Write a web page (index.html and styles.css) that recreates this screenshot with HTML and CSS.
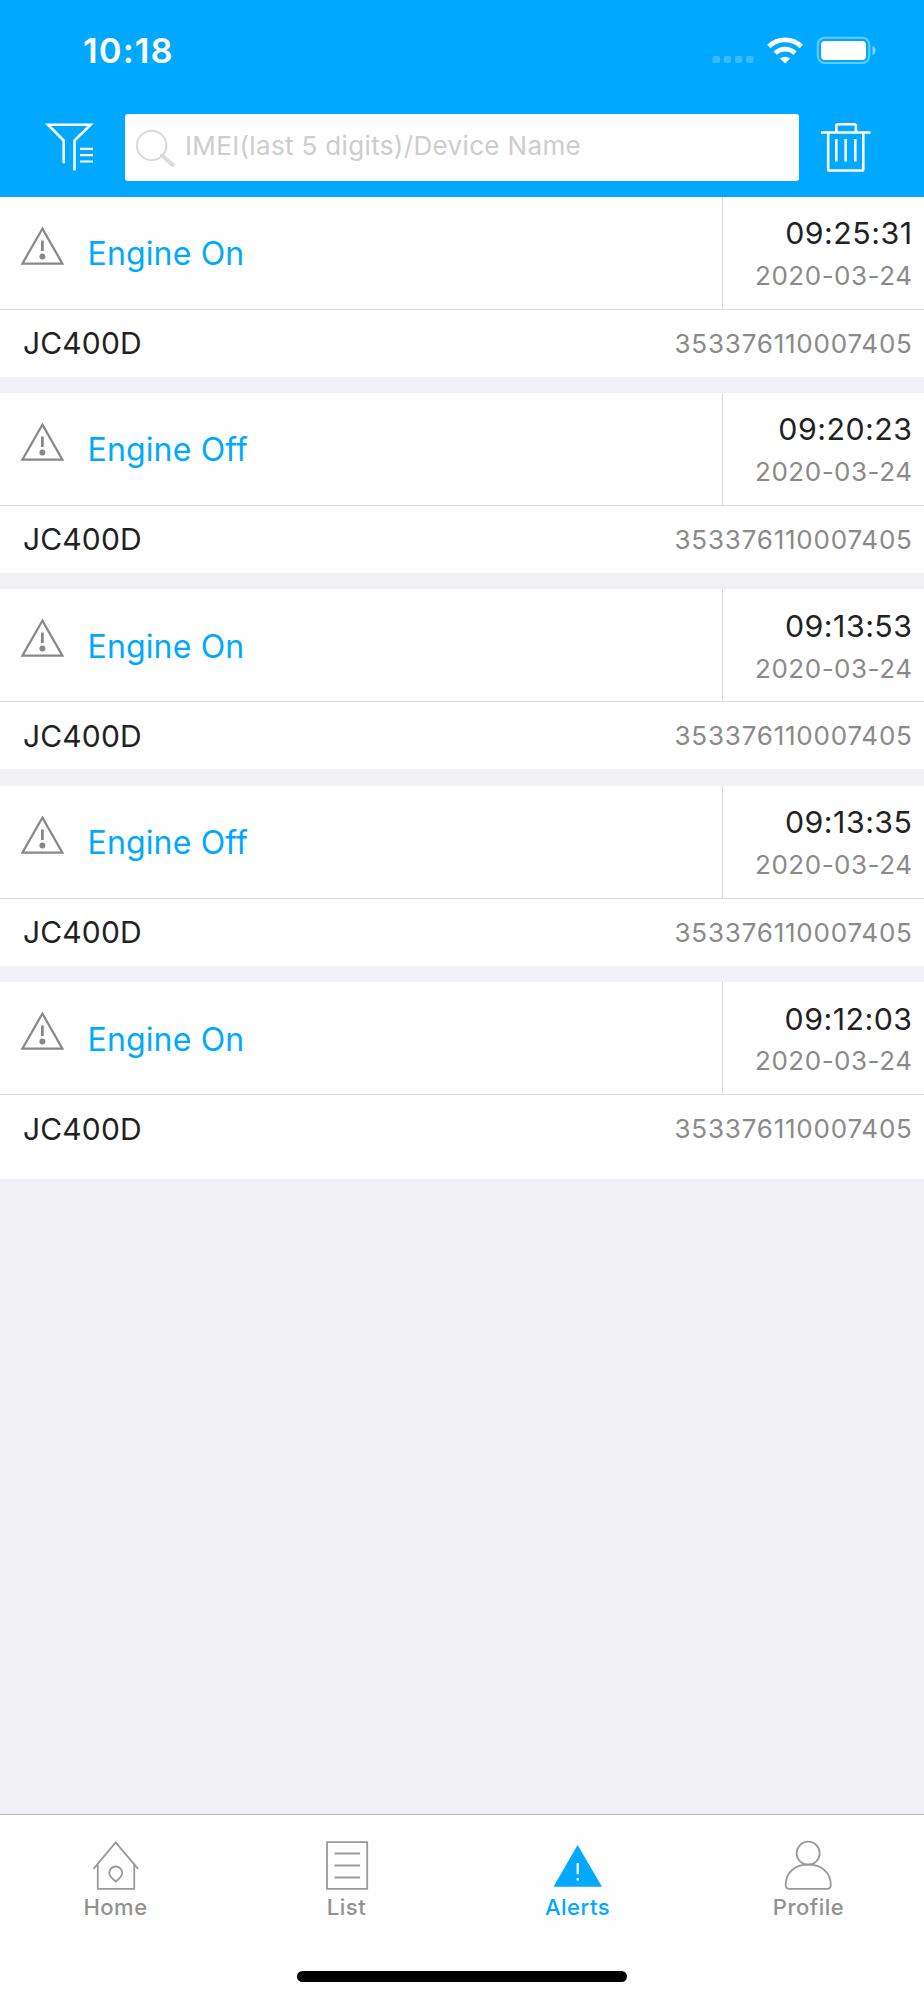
FILE: index.html
```html
<!DOCTYPE html>
<html lang="en">
<head>
<meta charset="utf-8">
<title>Alerts</title>
<link rel="stylesheet" href="styles.css">
</head>
<body>
<svg class="defs" aria-hidden="true">
  <symbol id="warning" viewBox="0 0 46 42">
    <path d="M22.400 3.600 42.400 38.600H2.400Z" fill="none" stroke="#888" stroke-width="2.2"/>
    <path d="M22.400 15.500v10.500" stroke="#888" stroke-width="2.800"/>
    <circle cx="22.400" cy="31.500" r="3" fill="#888"/>
  </symbol>
</svg>
<div class="screen">
  <header class="header">
    <div class="status">
      <span class="clock">10:18</span>
      <svg class="indicators" width="166" height="30" viewBox="711 36 166 30">
        <g fill="#fff" fill-opacity=".22">
          <rect x="712.500" y="56" width="7.500" height="7" rx="2"/><rect x="723.700" y="56" width="7.500" height="7" rx="2"/><rect x="734.900" y="56" width="7.500" height="7" rx="2"/><rect x="746" y="56" width="7.500" height="7" rx="2"/>
        </g>
        <g fill="none" stroke="#fff" stroke-width="4.800">
          <path d="M768.900 46.500a23 23 0 0 1 32.400 0"/>
          <path d="M775.300 53.200a14 14 0 0 1 19.600 0"/>
        </g>
        <path d="M780 58.600a7.600 7.600 0 0 1 10.200 0L785.100 63.500Z" fill="#fff"/>
        <rect x="817.800" y="37.700" width="51.500" height="25.300" rx="7" fill="none" stroke="#fff" stroke-opacity=".4" stroke-width="2"/>
        <rect x="821" y="41" width="45" height="19" rx="4" fill="#fff"/>
        <path d="M872.500 46v9q3-1.200 3-4.500t-3-4.500Z" fill="#fff" fill-opacity=".5"/>
      </svg>
    </div>
    <div class="toolbar">
      <svg class="filter" width="50" height="50" viewBox="44 122 50 50" fill="none" stroke="#fff" stroke-width="2.600">
        <path d="M63.700 163.300V140.500L48 124.700H90.500L74.500 140.500V170.500"/>
        <path d="M80 148.900h13M80 155.200h13M80 161.500h13" stroke-width="2.200"/>
      </svg>
      <label class="search">
        <svg width="40" height="40" viewBox="135 127 40 40" fill="none" stroke="#dadada">
          <circle cx="151.700" cy="144.500" r="14.700" stroke-width="2"/>
          <path d="M162 154.500 172.500 163.800" stroke-width="4" stroke-linecap="round"/>
        </svg>
        <span class="placeholder">IMEI(last 5 digits)/Device Name</span>
      </label>
      <svg class="trash" width="52" height="52" viewBox="820 121 52 52" fill="none" stroke="#fff" stroke-width="2.600">
        <path d="M821 132.500h49.500"/>
        <path d="M836.300 132v-6.500a1.300 1.300 0 0 1 1.300-1.300h17a1.300 1.300 0 0 1 1.300 1.300v6.500"/>
        <path d="M828.200 132.500v36.400a1.600 1.600 0 0 0 1.600 1.600h31.900a1.600 1.600 0 0 0 1.600-1.600V132.500"/>
        <path d="M836.300 139v22.500M845.700 139v22.500M855.300 139v22.500"/>
      </svg>
    </div>
  </header>

  <main class="list">
    <article class="card">
      <div class="event"><svg class="warn"><use href="#warning"/></svg><span class="title">Engine On</span><div class="when"><span class="time">09:25:31</span><span class="date">2020-03-24</span></div></div>
      <div class="device"><span class="model">JC400D</span><span class="imei">353376110007405</span></div>
    </article>
    <article class="card">
      <div class="event"><svg class="warn"><use href="#warning"/></svg><span class="title">Engine Off</span><div class="when"><span class="time">09:20:23</span><span class="date">2020-03-24</span></div></div>
      <div class="device"><span class="model">JC400D</span><span class="imei">353376110007405</span></div>
    </article>
    <article class="card">
      <div class="event"><svg class="warn"><use href="#warning"/></svg><span class="title">Engine On</span><div class="when"><span class="time">09:13:53</span><span class="date">2020-03-24</span></div></div>
      <div class="device"><span class="model">JC400D</span><span class="imei">353376110007405</span></div>
    </article>
    <article class="card">
      <div class="event"><svg class="warn"><use href="#warning"/></svg><span class="title">Engine Off</span><div class="when"><span class="time">09:13:35</span><span class="date">2020-03-24</span></div></div>
      <div class="device"><span class="model">JC400D</span><span class="imei">353376110007405</span></div>
    </article>
    <article class="card">
      <div class="event"><svg class="warn"><use href="#warning"/></svg><span class="title">Engine On</span><div class="when"><span class="time">09:12:03</span><span class="date">2020-03-24</span></div></div>
      <div class="device"><span class="model">JC400D</span><span class="imei">353376110007405</span></div>
    </article>
  </main>

  <footer class="footer">
    <nav class="tabs">
      <a class="tab">
        <svg width="50" height="50" viewBox="91 1840 50 50" fill="none" stroke="#999" stroke-width="1.800"><path d="M93.500 1868.800 115.700 1842.500 138 1868.800M97.800 1864.500V1888.800H134.200V1864.500"/><path d="M115.700 1881.500C112 1878.500 109.300 1876.500 109.300 1873A6.500 6.500 0 0 1 122.300 1873C122.300 1876.500 119.500 1878.500 115.700 1881.500Z"/></svg>
        <span>Home</span>
      </a>
      <a class="tab">
        <svg width="50" height="50" viewBox="322 1840 50 50" fill="none" stroke="#999" stroke-width="1.800"><path d="M327 1842.200H367.200V1888.900H327ZM334.500 1853.500H360M334.500 1865.500H360M334.500 1877.500H360"/></svg>
        <span>List</span>
      </a>
      <a class="tab active">
        <svg width="50" height="50" viewBox="553 1840 50 50"><path d="M577.600 1845 602 1886.700H553.500Z" fill="#00a9ff"/><path d="M577.700 1863v11.200M577.700 1878v2.500" stroke="#fff" stroke-width="2.200"/></svg>
        <span>Alerts</span>
      </a>
      <a class="tab">
        <svg width="50" height="50" viewBox="784 1840 50 50" fill="none" stroke="#999" stroke-width="1.800"><circle cx="808.200" cy="1853.200" r="11.500"/><path d="M789.500 1888.900H827Q830.800 1888.900 830.800 1885C830.800 1872 821 1864.700 808.200 1864.700S785.700 1872 785.700 1885Q785.700 1888.900 789.500 1888.900Z"/></svg>
        <span>Profile</span>
      </a>
    </nav>
    <div class="home-bar"></div>
  </footer>
</div>
</body>
</html>
```
FILE: styles.css
```css
* { box-sizing: border-box; }
body { margin: 0; font-family: Inter, "Liberation Sans", sans-serif; font-feature-settings: "calt" 0; }
.defs { position: absolute; width: 0; height: 0; }
svg { display: block; flex: none; }
span { white-space: nowrap; }

.screen { width: 924px; height: 2000px; display: flex; flex-direction: column; background: #f0f0f5; }

.header { flex: none; height: 196.700px; background: #00a9ff; }
.status { height: 114px; padding: 36px 47px 0 83px; display: flex; justify-content: space-between; }
.clock { color: #fff; font-size: 34.500px; line-height: 30px; font-weight: 600; letter-spacing: 1.150px; }
.toolbar { height: 67px; padding-left: 44px; display: flex; }
.filter { margin: 8px 31px 0 0; }
.search { width: 674px; height: 67px; margin-right: 21px; padding-left: 10px; display: flex; align-items: center; background: #fff; border-radius: 3px; }
.trash { margin-top: 7px; }
.placeholder { margin: -4px 0 0 10px; color: #cdcdcd; font-size: 26px; line-height: 32px; letter-spacing: .350px; }

.list { display: flex; flex-direction: column; gap: 16.400px; }
.card { height: 180px; background: #fff; }
.card:last-child { height: 196.500px; }
.event { height: 112.900px; border-bottom: 1px solid #d9d9db; display: flex; }
.warn { width: 46px; height: 42px; margin: 28px 0 0 19.500px; }
.title { margin: 38.300px 0 0 22px; color: #00a9ff; font-size: 32px; line-height: 38px; letter-spacing: .150px; }
.when { width: 202px; margin-left: auto; padding: 17.400px 11.500px 0 0; border-left: 1px solid #d9d9db; display: flex; flex-direction: column; align-items: flex-end; }
.time { color: #222; font-size: 30.300px; line-height: 38px; letter-spacing: .500px; }
.date { margin-top: 7.800px; color: #8a8a8a; font-size: 26px; line-height: 32px; letter-spacing: .520px; }
.device { height: 67px; padding: 0 11.300px 0 23px; display: flex; justify-content: space-between; align-items: center; }
.model { color: #222; font-size: 30px; letter-spacing: .150px; }
.imei { color: #8a8a8a; font-size: 26px; letter-spacing: .780px; }

.footer { height: 186px; margin-top: auto; background: #fefefe; border-top: 1px solid #b8b8bc; }
.tabs { display: grid; grid-template-columns: repeat(4, 1fr); }
.tab { padding-top: 25px; display: flex; flex-direction: column; align-items: center; color: #929292; font-size: 22px; line-height: 28px; font-weight: 500; }
.tab span { margin-top: 3px; letter-spacing: .5px; }
.active { color: #00a9ff; }
.home-bar { width: 330px; height: 11px; margin: 50px auto 0; border-radius: 6px; background: #000; }
```
